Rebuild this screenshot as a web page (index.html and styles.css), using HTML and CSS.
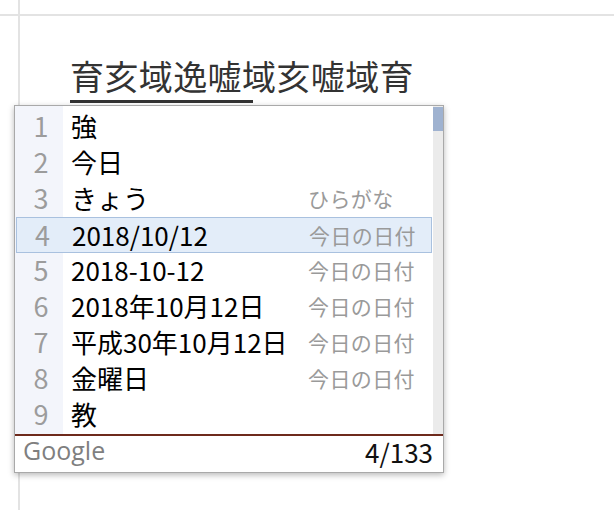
FILE: index.html
```html
<!DOCTYPE html>
<html lang="ja">
<head>
<meta charset="utf-8">
<link rel="stylesheet" href="styles.css">
</head>
<body>
<div class="page">
  <div class="doc">
    <p class="line"><span class="composing">育亥域逸嘘</span>域亥嘘域育</p>
  </div>
  <div class="ime">
    <div class="body">
      <ol class="list">
        <li class="row"><span class="num">1</span><span class="cand">強</span><span class="note"></span></li>
        <li class="row"><span class="num">2</span><span class="cand">今日</span><span class="note"></span></li>
        <li class="row"><span class="num">3</span><span class="cand">きょう</span><span class="note">ひらがな</span></li>
        <li class="row selected"><span class="num">4</span><span class="cand">2018/10/12</span><span class="note">今日の日付</span></li>
        <li class="row"><span class="num">5</span><span class="cand">2018-10-12</span><span class="note">今日の日付</span></li>
        <li class="row"><span class="num">6</span><span class="cand">2018年10月12日</span><span class="note">今日の日付</span></li>
        <li class="row"><span class="num">7</span><span class="cand">平成30年10月12日</span><span class="note">今日の日付</span></li>
        <li class="row"><span class="num">8</span><span class="cand">金曜日</span><span class="note">今日の日付</span></li>
        <li class="row"><span class="num">9</span><span class="cand">教</span><span class="note"></span></li>
      </ol>
      <div class="scrollbar"><div class="thumb"></div></div>
    </div>
    <div class="footer">
      <span class="brand">Google</span>
      <span class="count">4/133</span>
    </div>
  </div>
</div>
</body>
</html>
```

FILE: styles.css
```css
html, body {
  margin: 0;
  padding: 0;
  background: #fff;
}

.page {
  position: relative;
  width: 614px;
  height: 510px;
  overflow: hidden;
  background:
    linear-gradient(#e3e3e3, #e3e3e3) 0 14px / 100% 2px no-repeat,
    linear-gradient(#e3e3e3, #e3e3e3) 18px 0 / 2px 100% no-repeat,
    #fff;
  font-family: "Noto Sans CJK JP", "Noto Sans", sans-serif;
}

.doc {
  padding: 54px 0 0 70px;
}

.line {
  margin: 0;
  font-size: 34px;
  line-height: 44px;
  color: #333;
  white-space: nowrap;
  letter-spacing: 0.4px;
}

.composing {
  border-bottom: 3px solid #333;
  padding-right: 11px;
  margin-right: -11px;
}

.ime {
  position: absolute;
  left: 14px;
  top: 105px;
  width: 428px;
  border: 1px solid #a9a9a9;
  background: #fff;
  box-shadow: 0 2px 6px rgba(0, 0, 0, 0.28);
}

.body {
  display: flex;
  height: 328px;
  border-bottom: 2px solid #6e2a1c;
}

.list {
  list-style: none;
  margin: 0;
  padding: 3px 0 0;
  flex: 1;
  background: linear-gradient(#f3f5fb, #f3f5fb) 0 0 / 48px 100% no-repeat;
}

.row {
  display: grid;
  grid-template-columns: 48px 245px 1fr;
  align-items: center;
  height: 36px;
  padding-bottom: 3px;
  box-sizing: border-box;
}

.row.selected {
  background: #e3edf9;
  border: 1px solid #a9c1df;
  margin-left: 1px;
  padding-bottom: 1px;
  grid-template-columns: 47px 245px 1fr;
}

.num {
  text-align: center;
  font-size: 27px;
  line-height: 32px;
  color: #9c9c9c;
  padding-left: 4px;
}

.cand {
  padding-left: 8px;
  font-size: 26px;
  line-height: 32px;
  color: #000;
  white-space: nowrap;
}

.note {
  font-size: 21px;
  line-height: 32px;
  color: #9a9a9a;
  white-space: nowrap;
  letter-spacing: 0.4px;
}

.scrollbar {
  width: 10px;
  background: #ebebeb;
  border-left: 1px solid #fff;
}

.thumb {
  height: 24px;
  margin-top: 1px;
  background: #9fb2d0;
}

.footer {
  display: flex;
  justify-content: space-between;
  align-items: flex-start;
  height: 36px;
  padding: 0 10px 0 8px;
}

.brand {
  font-family: "Open Sans", "Noto Sans", sans-serif;
  font-size: 25px;
  color: #7f7f7f;
  line-height: 28px;
}

.count {
  font-size: 26px;
  color: #111;
  line-height: 28px;
  margin-top: 2px;
}
```
